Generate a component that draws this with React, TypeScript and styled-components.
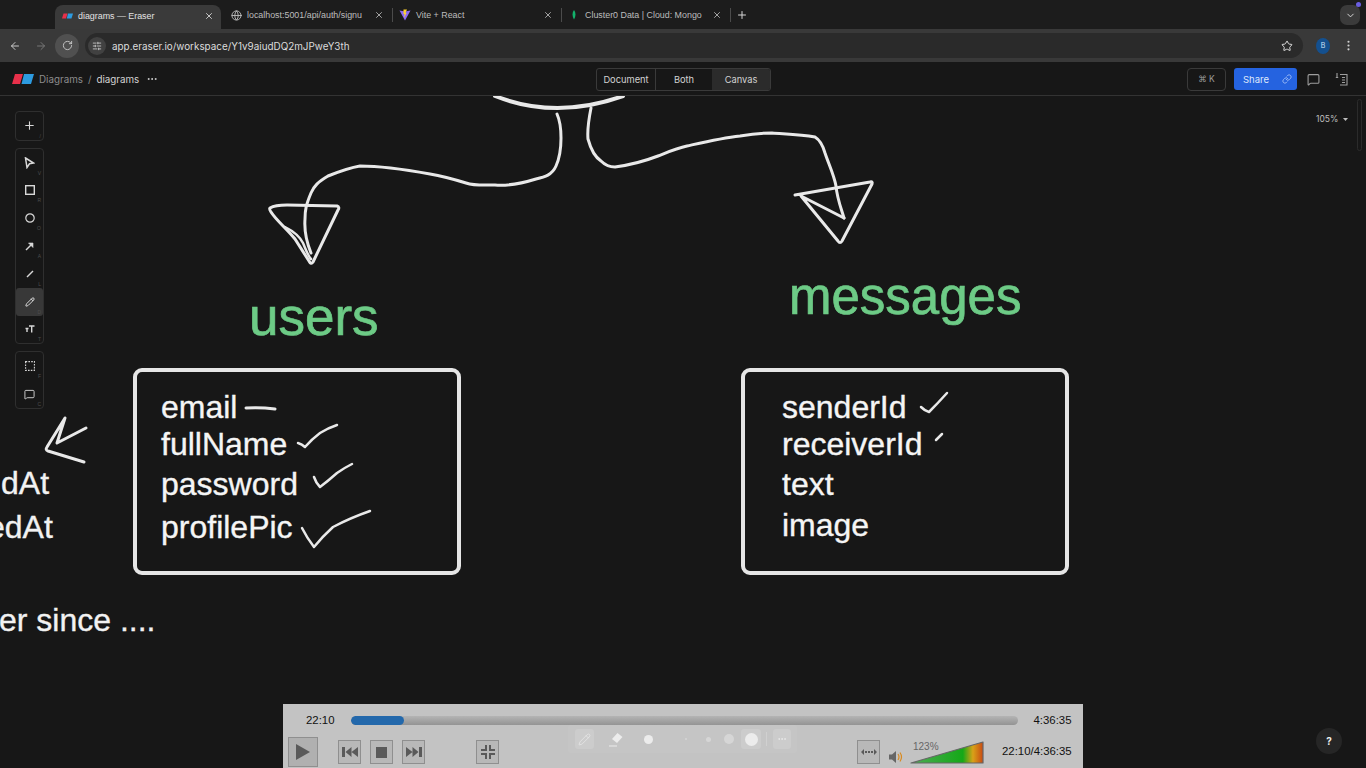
import React from 'react'
import styled, { createGlobalStyle } from 'styled-components'
import {
  ArrowLeft, ArrowRight, ChevronDown, Globe, Link as LinkIcon, MessageSquare, MoreHorizontal,
  MoreVertical, Pencil, Plus, RotateCw, SlidersHorizontal, Star, X,
} from 'lucide-react'

const GlobalStyle = createGlobalStyle`
html, body {
  margin: 0;
  padding: 0;
  height: 100%;
  overflow: hidden;
  background: #171717;
}
* { box-sizing: border-box; }
`

const Page = styled.div`
display: flex;
flex-direction: column;
width: 1366px;
height: 768px;
font-family: Inter, "Liberation Sans", sans-serif;
color: #d8d8d8;
`

/* browser chrome */
const TabStrip = styled.div`
display: flex;
align-items: flex-end;
height: 29px;
padding-left: 55px;
background: #1c1c1c;
flex: none;
`

const Tab = styled.div<{ $active?: boolean; $w: number; $pl: number }>`
display: flex;
align-items: center;
gap: 5px;
width: ${p => p.$w}px;
height: 24px;
margin-bottom: ${p => (p.$active ? 0 : 2)}px;
padding: 0 ${p => (p.$active ? 7 : 5)}px ${p => (p.$active ? 3 : 0)}px ${p => p.$pl}px;
border-radius: 8px 8px 0 0;
background: ${p => (p.$active ? '#3a3a3a' : 'transparent')};
font-family: "Liberation Sans", sans-serif;
font-size: 8.9px;
color: ${p => (p.$active ? '#e2e2e2' : '#bdbdbd')};
`

const TabTitle = styled.span`
flex: 1;
min-width: 0;
white-space: nowrap;
`

const TabSep = styled.div`
width: 1px;
height: 14px;
margin: 0 3px 7px 3px;
background: #4b4b4b;
`

const NewTab = styled.div`
display: flex;
align-items: center;
height: 24px;
margin: 0 0 2px 2px;
color: #d6d6d6;
`

const TabMenu = styled.div`
position: relative;
display: flex;
align-items: center;
justify-content: center;
width: 20px;
height: 20px;
margin: 0 6px 4px auto;
border-radius: 7px;
background: #3b3b3b;
color: #e0e0e0;

&::after {
  content: '';
  position: absolute;
  top: -3px;
  right: -1px;
  width: 5px;
  height: 5px;
  border-radius: 50%;
  background: #6a5ee0;
}
`

const NavBar = styled.div`
display: flex;
align-items: center;
height: 33px;
padding-left: 3px;
background: #393939;
flex: none;
`

const NavIcon = styled.div<{ $dim?: boolean; $circle?: boolean }>`
display: flex;
align-items: center;
justify-content: center;
width: 24px;
height: 24px;
margin-right: ${p => (p.$circle ? 6 : 2)}px;
border-radius: 50%;
background: ${p => (p.$circle ? '#505050' : 'transparent')};
color: ${p => (p.$dim ? '#777' : '#c9c9c9')};
`

const Omnibox = styled.div`
display: flex;
align-items: center;
width: 1218px;
height: 25px;
border-radius: 13px;
background: #2a2a2a;
font-size: 9.9px;
color: #dcdcdc;
`

const SiteBadge = styled.div`
display: flex;
align-items: center;
justify-content: center;
width: 18px;
height: 18px;
margin: 0 6px 0 3px;
border-radius: 50%;
background: #414141;
color: #d0d0d0;
`

const OmniStar = styled.div`
display: flex;
margin: 0 10px 0 auto;
color: #dedede;
`

const Avatar = styled.div`
display: flex;
align-items: center;
justify-content: center;
width: 14px;
height: 16px;
margin-left: 13px;
border-radius: 50%;
background: #14508f;
font-size: 7px;
color: #cfe2f7;
`

const KebabWrap = styled.div`
display: flex;
margin-left: 12px;
color: #cfcfcf;
`

/* eraser header */
const AppBar = styled.div`
display: flex;
align-items: center;
height: 34px;
padding: 1px 18px 0 12px;
background: #171717;
border-bottom: 1px solid #333;
flex: none;
`

const Crumbs = styled.div`
display: flex;
align-items: center;
width: 584px;
font-size: 9.8px;
color: #8d8d8d;
`

const CrumbSep = styled.span`
margin: 0 5px;
`

const CrumbNow = styled.span`
color: #d4d4d4;
`

const CrumbDots = styled.div`
display: flex;
margin-left: 7px;
color: #d4d4d4;
`

const LogoSvg = styled.svg`
margin-right: 5px;
`

const Segments = styled.div`
display: flex;
height: 23px;
border: 1px solid #3a3a3a;
border-radius: 3px;
overflow: hidden;
`

const Segment = styled.div<{ $on?: boolean; $w: number }>`
display: flex;
align-items: center;
justify-content: center;
width: ${p => p.$w}px;
border-left: ${p => (p.$on ? 'none' : '1px solid #3a3a3a')};
background: ${p => (p.$on ? '#2b2b2b' : 'transparent')};
font-size: 9.3px;
color: #d2d2d2;

&:first-child { border-left: none; }
`

const Shortcut = styled.div`
display: flex;
align-items: center;
justify-content: center;
width: 39px;
height: 23px;
margin-left: auto;
border: 1px solid #3a3a3a;
border-radius: 4px;
font-size: 8.5px;
color: #9c9c9c;
`

const ShareButton = styled.div`
display: flex;
align-items: center;
gap: 13px;
width: 63px;
height: 22px;
margin-left: 8px;
padding-left: 9px;
border-radius: 3px;
background: #2563e0;
font-size: 9.5px;
color: #dfe8fb;
`

const ShareLink = styled.span`
display: flex;
color: #a9c4f7;
`

const BarIcon = styled.div<{ $ml: number }>`
display: flex;
margin-left: ${p => p.$ml}px;
color: #9e9e9e;
`

/* canvas */
const Canvas = styled.div`
position: relative;
flex: 1;
overflow: hidden;
background: #171717;
font-family: "Liberation Sans", sans-serif;
`

const Sketch = styled.svg`
position: absolute;
left: 0;
top: 0;
`

const Label = styled.div<{ $x: number; $y: number; $size: number; $color?: string }>`
position: absolute;
left: ${p => p.$x}px;
top: ${p => p.$y - 96}px;
font-size: ${p => p.$size}px;
line-height: ${p => (p.$size > 40 ? 60 : 40)}px;
color: ${p => p.$color || '#f2f2f2'};
-webkit-text-stroke: ${p => (p.$size > 40 ? 0.7 : 0.35)}px currentColor;
white-space: nowrap;
`

const Card = styled.div<{ $x: number; $pad: number }>`
position: absolute;
left: ${p => p.$x}px;
top: 272px;
width: 328px;
height: 207px;
padding: 15px 0 0 ${p => p.$pad}px;
border: 4px solid #e6e6e6;
border-radius: 9px;
`

const Field = styled.div<{ $mt?: number }>`
margin-top: ${p => p.$mt || 0}px;
font-size: 32px;
line-height: 40px;
color: #f5f5f5;
-webkit-text-stroke: 0.35px currentColor;
white-space: nowrap;
`

const ToolColumn = styled.div`
position: absolute;
left: 15px;
top: 15px;
display: flex;
flex-direction: column;
gap: 7px;
`

const ToolGroup = styled.div`
display: flex;
flex-direction: column;
border: 1px solid #2f2f2f;
border-radius: 4px;
background: #171717;
`

const Tool = styled.div<{ $on?: boolean; $key?: string }>`
position: relative;
display: flex;
align-items: center;
justify-content: center;
width: 27px;
height: 27.8px;
border-radius: 3px;
background: ${p => (p.$on ? '#383838' : 'transparent')};
color: #d8d8d8;

&::after {
  content: '${p => p.$key || ''}';
  position: absolute;
  right: 2px;
  bottom: 1px;
  font-size: 5px;
  color: #4d4d4d;
}
`

const Zoom = styled.div`
position: absolute;
top: 18px;
left: 1316px;
display: flex;
align-items: center;
gap: 5px;
font-family: Inter, sans-serif;
font-size: 8.5px;
color: #bdbdbd;
`

const ScrollThumb = styled.div`
position: absolute;
top: 3px;
left: 1357px;
width: 5px;
height: 52px;
border: 1px solid #2b2b2b;
border-radius: 3px;
`

const HelpButton = styled.div`
position: absolute;
left: 1316px;
top: 632px;
display: flex;
align-items: center;
justify-content: center;
width: 26px;
height: 26px;
border-radius: 50%;
background: #262626;
font-family: Inter, sans-serif;
font-size: 10px;
font-weight: 700;
color: #eee;
`

/* video player overlay */
const Player = styled.div`
position: absolute;
left: 283px;
top: 608px;
width: 800px;
height: 64px;
background: #c3c3c3;
font-family: "Liberation Sans", sans-serif;
font-size: 11.4px;
color: #111;
`

const PlayerTop = styled.div`
display: flex;
align-items: center;
height: 32px;
padding-left: 23px;
`

const TrackWrap = styled.div`
width: 667px;
height: 9px;
margin: 0 16px;
border-radius: 5px;
background: linear-gradient(#b4b4b4, #949494);
overflow: hidden;
`

const TrackFill = styled.div`
height: 100%;
border-radius: 5px;
background: #2368ab;
`

const PlayerBottom = styled.div`
display: flex;
align-items: center;
height: 32px;
padding-left: 5px;
`

const PlayerButton = styled.div<{ $ml?: number; $big?: boolean }>`
display: flex;
align-items: center;
justify-content: center;
flex: none;
width: ${p => (p.$big ? 30 : 23)}px;
height: ${p => (p.$big ? 30 : 24)}px;
margin-left: ${p => p.$ml || 0}px;
border: 1px solid #8f8f8f;
background: ${p => (p.$big ? '#b0b0b0' : '#b8b8b8')};
color: #5a5a5a;
`

const SpeakerSvg = styled.svg`
margin: 9px 0 0 9px;
`

const VolumeWrap = styled.div`
position: relative;
width: 74px;
height: 24px;
margin-left: 7px;
`

const VolumeText = styled.span`
position: absolute;
left: 3px;
top: 1px;
font-size: 10px;
color: #666;
`

const TotalTime = styled.div`
margin: 0 0 2px 18px;
`

const PenBar = styled.div`
position: absolute;
left: 285px;
top: 21px;
display: flex;
align-items: center;
width: 229px;
height: 28px;
padding-left: 7px;
border-radius: 3px;
background: rgba(255, 255, 255, 0.04);
color: #ececec;
`

const PenSlot = styled.div<{ $on?: boolean; $w: number; $ml?: number }>`
display: flex;
align-items: center;
justify-content: center;
width: ${p => p.$w}px;
height: 20px;
margin-left: ${p => p.$ml || 0}px;
border-radius: 3px;
background: ${p => (p.$on ? 'rgba(255,255,255,0.12)' : 'transparent')};
`

const Dot = styled.div<{ $size: number }>`
width: ${p => p.$size}px;
height: ${p => p.$size}px;
border-radius: 50%;
background: currentColor;
`

const FadedDot = styled(Dot)`
opacity: 0.45;
`

const PenSep = styled.div`
width: 1px;
height: 14px;
margin-left: 5px;
background: rgba(255, 255, 255, 0.2);
`

const PlayGlyph = () => (
  <svg width="14" height="16" viewBox="0 0 14 16"><path d="M0 0 L14 8 L0 16 Z" fill="currentColor" /></svg>
)

const EraserMark = () => (
  <LogoSvg width="22" height="10" viewBox="0 0 22 10">
    <path d="M3 0 H11 L8 10 H0 Z" fill="#e8304a" />
    <path d="M12 0 H22 L19 10 H9.5 Z" fill="#2d9be0" />
  </LogoSvg>
)

const TabMark = () => (
  <svg width="11" height="6" viewBox="0 0 22 10">
    <path d="M3 0 H11 L8 10 H0 Z" fill="#e8304a" />
    <path d="M12 0 H22 L19 10 H9.5 Z" fill="#2d9be0" />
  </svg>
)

const ViteMark = () => (
  <svg width="12" height="12" viewBox="0 0 12 12">
    <path d="M0.5 1.5 L6 2.5 L11.5 1.5 L6 11.5 Z" fill="#8d6bf5" />
    <path d="M4.5 0.5 L8 0.5 L6.5 4 L7.5 4 L5 9 L5.5 5 L4.5 5 Z" fill="#ffd22e" />
  </svg>
)

const LeafMark = () => (
  <svg width="12" height="12" viewBox="0 0 12 12">
    <path d="M6 1 C8 3.5 8 7.5 6 10.5 C4 7.5 4 3.5 6 1 Z" fill="#13b26b" />
  </svg>
)

const Drawing = () => (
  <Sketch width="1366" height="672" viewBox="0 96 1366 672" fill="none" stroke="#e9e9e9" strokeLinecap="round" strokeLinejoin="round">
    <path d="M495 96 Q556 120 623 96" strokeWidth="4" />
    <path strokeWidth="3" d="M557 114 C562 125 563 150 556 166 C552 175 545 177 536 179 C520 184 508 186 495 185 C485 185 475 186 466 183 C453 179 442 176 430 174 C408 170 385 166 360 166 C348 168 338 172 328 176 C318 182 314 186 311 193 C306 205 305 210 305 219 C304 232 307 243 311 253" />
    <path strokeWidth="3" d="M270 208 C275 205 281 205 287 205 L337 206 Q340 207 338 210 L313 262 Q311 265 309 261 L295 239 C286 228 276 220 271 212 Q269 209 270 208 Z" />
    <path strokeWidth="2.5" d="M285 227 C293 231 300 237 303 243 C306 250 308 256 311 259" />
    <path strokeWidth="3" d="M591 108 C589 118 587 128 588 139 C591 150 595 157 601 161 C605 165 610 167 615 167 C630 165 645 161 658 156 C668 152 677 148 687 146 C705 142 722 138 740 136 C752 134 762 133 772 133 C785 134 800 134 815 137 C820 140 823 146 825 153 C829 165 834 175 836 186 C837 198 841 208 844 218" />
    <path strokeWidth="3" d="M795 195 L870 182 Q873 181 872 184 L842 241 Q840 244 838 241 L801 196 L844 218" />
    <path strokeWidth="3" d="M86 428 L57 443 L65 418 L47 447 Q45 450 48 451 L84 462" />
    <path strokeWidth="3" d="M246 408 Q260 407 275 409" />
    <path strokeWidth="2.5" d="M298 443 Q302 444 305 447 Q312 439 320 433 Q328 428 337 425" />
    <path strokeWidth="2.5" d="M314 477 Q316 483 320 487 Q328 481 337 473 Q344 468 352 464" />
    <path strokeWidth="2.5" d="M302 528 Q307 538 314 547 Q322 537 333 527 Q350 518 370 511" />
    <path strokeWidth="2.5" d="M921 407 Q925 411 929 412 Q938 403 947 393" />
    <path strokeWidth="2.5" d="M936 440 L942 434" />
  </Sketch>
)

const App = () => {
  return (
    <Page>
      <GlobalStyle />
      <TabStrip>
        <Tab $active $w={166} $pl={7}><TabMark /><TabTitle>diagrams — Eraser</TabTitle><X size={10} /></Tab>
        <Tab $w={168} $pl={10}><Globe size={11} /><TabTitle>localhost:5001/api/auth/signu</TabTitle><X size={10} /></Tab>
        <TabSep />
        <Tab $w={162} $pl={3}><ViteMark /><TabTitle>Vite + React</TabTitle><X size={10} /></Tab>
        <TabSep />
        <Tab $w={162} $pl={3}><LeafMark /><TabTitle>Cluster0 Data | Cloud: Mongo</TabTitle><X size={10} /></Tab>
        <TabSep />
        <NewTab><Plus size={12} /></NewTab>
        <TabMenu><ChevronDown size={11} /></TabMenu>
      </TabStrip>
      <NavBar>
        <NavIcon><ArrowLeft size={12} /></NavIcon>
        <NavIcon $dim><ArrowRight size={12} /></NavIcon>
        <NavIcon $circle><RotateCw size={11} /></NavIcon>
        <Omnibox>
          <SiteBadge><SlidersHorizontal size={10} /></SiteBadge>
          app.eraser.io/workspace/Y1v9aiudDQ2mJPweY3th
          <OmniStar><Star size={12} /></OmniStar>
        </Omnibox>
        <Avatar>B</Avatar>
        <KebabWrap><MoreVertical size={13} /></KebabWrap>
      </NavBar>
      <AppBar>
        <Crumbs>
          <EraserMark />
          Diagrams<CrumbSep>/</CrumbSep><CrumbNow>diagrams</CrumbNow>
          <CrumbDots><MoreHorizontal size={12} /></CrumbDots>
        </Crumbs>
        <Segments>
          <Segment $w={58}>Document</Segment>
          <Segment $w={57}>Both</Segment>
          <Segment $on $w={58}>Canvas</Segment>
        </Segments>
        <Shortcut>⌘ K</Shortcut>
        <ShareButton>Share<ShareLink><LinkIcon size={10} /></ShareLink></ShareButton>
        <BarIcon $ml={10}><MessageSquare size={13} /></BarIcon>
        <BarIcon $ml={15}>
          <svg width="13" height="14" viewBox="0 0 13 14" fill="none" stroke="currentColor" strokeWidth="1.1">
            <path d="M2 1 V5 M0.8 5.5 H3.2" />
            <path d="M5 2.5 H12 V13 H5 M7 5.5 H10 M7 8 H10 M7 10.5 H10" />
          </svg>
        </BarIcon>
      </AppBar>
      <Canvas>
        <Drawing />
        <Label $x={249} $y={287} $size={53} $color="#6dcb86">users</Label>
        <Label $x={789} $y={267} $size={51} $color="#6dcb86">messages</Label>
        <Card $x={133} $pad={24}>
          <Field>email</Field>
          <Field $mt={-3}>fullName</Field>
          <Field $mt={0}>password</Field>
          <Field $mt={3}>profilePic</Field>
        </Card>
        <Card $x={741} $pad={37}>
          <Field>senderId</Field>
          <Field $mt={-3}>receiverId</Field>
          <Field $mt={0}>text</Field>
          <Field $mt={1}>image</Field>
        </Card>
        <Label $x={1} $y={463} $size={32}>dAt</Label>
        <Label $x={-13} $y={507} $size={32}>edAt</Label>
        <Label $x={-1} $y={600} $size={32}>er since ....</Label>
        <ToolColumn>
          <ToolGroup>
            <Tool $key="/"><Plus size={13} /></Tool>
          </ToolGroup>
          <ToolGroup>
            <Tool $key="V">
              <svg width="11" height="12" viewBox="0 0 11 12" fill="none" stroke="currentColor" strokeWidth="1.5"><path d="M1.5 1 L9.5 6 L5.5 6.8 L3 10.5 Z" /></svg>
            </Tool>
            <Tool $key="R">
              <svg width="10" height="10" viewBox="0 0 10 10" fill="none" stroke="currentColor" strokeWidth="1.4"><rect x="0.7" y="0.7" width="8.6" height="8.6" /></svg>
            </Tool>
            <Tool $key="O">
              <svg width="10" height="10" viewBox="0 0 10 10" fill="none" stroke="currentColor" strokeWidth="1.2"><circle cx="5" cy="5" r="4.2" /></svg>
            </Tool>
            <Tool $key="A">
              <svg width="9" height="9" viewBox="0 0 9 9" fill="currentColor" stroke="currentColor" strokeWidth="1.4"><path d="M1 8 L6.5 2.5" /><path d="M3.5 1 H8 V5.5 Z" strokeWidth="0.6" /></svg>
            </Tool>
            <Tool $key="L">
              <svg width="10" height="10" viewBox="0 0 10 10" stroke="currentColor" strokeWidth="1.4"><path d="M2 8 L8 2" /></svg>
            </Tool>
            <Tool $on $key="D"><Pencil size={10} strokeWidth={2.4} /></Tool>
            <Tool $key="T">
              <svg width="10" height="8" viewBox="0 0 10 8" fill="none" stroke="currentColor" strokeWidth="1.4"><path d="M4 1 H9.5 M6.7 1 V7.5 M0.5 3.5 H3.5 M2 3.5 V7" /></svg>
            </Tool>
          </ToolGroup>
          <ToolGroup>
            <Tool $key="F">
              <svg width="10" height="10" viewBox="0 0 10 10" fill="none" stroke="currentColor" strokeWidth="1.1" strokeDasharray="1.6 1.2"><rect x="0.6" y="0.6" width="8.8" height="8.8" /></svg>
            </Tool>
            <Tool $key="C"><MessageSquare size={11} /></Tool>
          </ToolGroup>
        </ToolColumn>
        <Zoom>
          105%
          <svg width="5" height="3" viewBox="0 0 5 3" fill="currentColor"><path d="M0 0 H5 L2.5 3 Z" /></svg>
        </Zoom>
        <ScrollThumb />
        <HelpButton>?</HelpButton>
        <Player>
          <PlayerTop>
            22:10
            <TrackWrap><TrackFill style={{ width: `${(53 / 667) * 100}%` }} /></TrackWrap>
            4:36:35
          </PlayerTop>
          <PlayerBottom>
            <PlayerButton $big><PlayGlyph /></PlayerButton>
            <PlayerButton $ml={20}>
              <svg width="16" height="10" viewBox="0 0 16 10" fill="currentColor"><path d="M0 0 H3 V10 H0 Z M3.5 5 L9.5 0 V10 Z M9.5 5 L16 0 V10 Z" /></svg>
            </PlayerButton>
            <PlayerButton $ml={9}>
              <svg width="11" height="11" viewBox="0 0 11 11" fill="currentColor"><rect width="11" height="11" /></svg>
            </PlayerButton>
            <PlayerButton $ml={9}>
              <svg width="16" height="10" viewBox="0 0 16 10" fill="currentColor"><path d="M0 0 L6.5 5 L0 10 Z M6.5 0 L12.5 5 L6.5 10 Z M13 0 H16 V10 H13 Z" /></svg>
            </PlayerButton>
            <PlayerButton $ml={51}>
              <svg width="14" height="14" viewBox="0 0 14 14" fill="currentColor"><path d="M4 0 H6 V6 H0 V4 H4 Z M8 0 H10 V4 H14 V6 H8 Z M0 8 H6 V14 H4 V10 H0 Z M8 8 H14 V10 H10 V14 H8 Z" /></svg>
            </PlayerButton>
            <PlayerButton $ml={358}>
              <svg width="16" height="6" viewBox="0 0 16 6" fill="currentColor"><path d="M0 3 L3 0 V6 Z M16 3 L13 0 V6 Z M4 2 H6 V4 H4 Z M7 2 H9 V4 H7 Z M10 2 H12 V4 H10 Z" /></svg>
            </PlayerButton>
            <SpeakerSvg width="14" height="14" viewBox="0 0 14 14">
              <path d="M0 4.5 H3 L7 1 V13 L3 9.5 H0 Z" fill="#666" />
              <path d="M9 4 Q11 7 9 10 M11 2.5 Q14 7 11 11.5" fill="none" stroke="#d98a1f" strokeWidth="1.2" />
            </SpeakerSvg>
            <VolumeWrap>
              <svg width="74" height="24" viewBox="0 0 74 24">
                <defs>
                  <linearGradient id="volumeFill" x1="0" x2="1" y1="0" y2="0">
                    <stop offset="0" stopColor="#4fab55" />
                    <stop offset="0.72" stopColor="#15a818" />
                    <stop offset="0.86" stopColor="#d9a118" />
                    <stop offset="1" stopColor="#c94a12" />
                  </linearGradient>
                </defs>
                <path d="M1 23 L73 2 V23 Z" fill="url(#volumeFill)" stroke="#666" strokeWidth="1.2" strokeLinejoin="round" />
              </svg>
              <VolumeText>123%</VolumeText>
            </VolumeWrap>
            <TotalTime>22:10/4:36:35</TotalTime>
          </PlayerBottom>
          <PenBar>
            <PenSlot $on $w={19}><Pencil size={13} strokeWidth={1.2} /></PenSlot>
            <PenSlot $w={18} $ml={13}>
              <svg width="16" height="15" viewBox="0 0 16 15"><path d="M9.5 1 L14.5 5 L9 11 L4 7 Z" fill="#ececec" /><path d="M1 14 H9" stroke="#ececec" /></svg>
            </PenSlot>
            <PenSlot $w={20} $ml={13}><Dot $size={9} /></PenSlot>
            <PenSlot $w={20} $ml={18}><FadedDot $size={2} /></PenSlot>
            <PenSlot $w={20} $ml={2}><FadedDot $size={5} /></PenSlot>
            <PenSlot $w={20} $ml={1}><FadedDot $size={10} /></PenSlot>
            <PenSlot $on $w={20} $ml={2}><Dot $size={13} /></PenSlot>
            <PenSep />
            <PenSlot $on $w={18} $ml={6}><MoreHorizontal size={10} /></PenSlot>
          </PenBar>
        </Player>
      </Canvas>
    </Page>
  )
}

export default App
